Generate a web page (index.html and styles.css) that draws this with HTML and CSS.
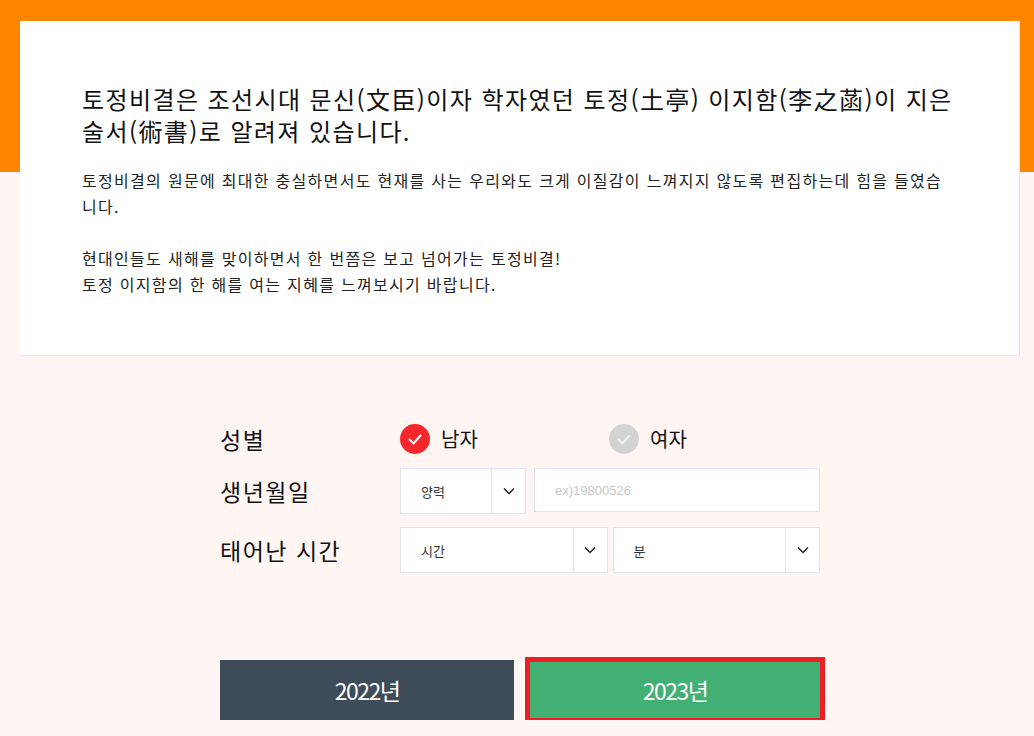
FILE: index.html
```html
<!DOCTYPE html>
<html lang="ko">
<head>
  <meta charset="UTF-8" />
  <meta name="viewport" content="width=device-width, initial-scale=1.0"/>
  <title>토정비결</title>
  <link rel="stylesheet" href="styles.css">
</head>
<body>

  <div class="page">
    <div class="intro-box">
      <h2>토정비결은 조선시대 문신(文臣)이자 학자였던 토정(土亭) 이지함(李之菡)이 지은<br>술서(術書)로 알려져 있습니다.</h2>
      <p>토정비결의 원문에 최대한 충실하면서도 현재를 사는 우리와도 크게 이질감이 느껴지지 않도록 편집하는데 힘을 들였습<br>니다.</p>
      <p>현대인들도 새해를 맞이하면서 한 번쯤은 보고 넘어가는 토정비결!<br>토정 이지함의 한 해를 여는 지혜를 느껴보시기 바랍니다.</p>
    </div>

    <div class="fortune-form">
      <div class="form-row gender-row">
        <div class="form-label">성별</div>
        <div class="gender-options">
          <label class="gender checked">
            <svg class="check" width="30" height="30" viewBox="0 0 30 30"><circle cx="15" cy="15" r="15"/><path d="M9.5 15.5 L13.5 19.5 L20.5 11.5"/></svg>
            <span>남자</span>
          </label>
          <label class="gender">
            <svg class="check" width="30" height="30" viewBox="0 0 30 30"><circle cx="15" cy="15" r="15"/><path d="M9.5 15.5 L13.5 19.5 L20.5 11.5"/></svg>
            <span>여자</span>
          </label>
        </div>
      </div>

      <div class="form-row">
        <div class="form-label">생년월일</div>
        <div class="birth-fields">
          <div class="select-box">
            <span class="select-value">양력</span>
            <span class="select-arrow"><svg width="12" height="8" viewBox="0 0 12 8"><path d="M1 1.5 L6 6.5 L11 1.5"/></svg></span>
          </div>
          <input class="birth-input" type="text" placeholder="ex)19800526">
        </div>
      </div>

      <div class="form-row">
        <div class="form-label">태어난 시간</div>
        <div class="time-fields">
          <div class="select-box">
            <span class="select-value">시간</span>
            <span class="select-arrow"><svg width="12" height="8" viewBox="0 0 12 8"><path d="M1 1.5 L6 6.5 L11 1.5"/></svg></span>
          </div>
          <div class="select-box">
            <span class="select-value">분</span>
            <span class="select-arrow"><svg width="12" height="8" viewBox="0 0 12 8"><path d="M1 1.5 L6 6.5 L11 1.5"/></svg></span>
          </div>
        </div>
      </div>
    </div>

    <div class="year-buttons">
      <button class="year-btn prev">2022년</button>
      <button class="year-btn current">2023년</button>
    </div>
  </div>

</body>
</html>
```

FILE: styles.css
```css
body {
  font-family: "Noto Sans CJK KR", "Noto Sans", sans-serif;
  background-color: #fff6f3;
  background-image: linear-gradient(#ff8500, #ff8500);
  background-size: 100% 172px;
  background-repeat: no-repeat;
  margin: 0;
  padding: 0;
  overflow: hidden;
  color: #111;
}

.page {
  width: 1040px;
  padding-top: 21px;
}

.intro-box {
  background: white;
  margin: 0 20px;
  padding: 62px 62px 58px;
  border: 1px solid #ebe7e5;
  border-top: none;
  border-left: none;
}

.intro-box h2 {
  font-size: 24px;
  font-weight: normal;
  line-height: 32px;
  letter-spacing: 1.4px;
  white-space: nowrap;
  margin: 0 0 20px;
  color: #111;
}

.intro-box p {
  font-size: 16px;
  line-height: 26px;
  letter-spacing: 1.3px;
  margin: 0 0 26px;
  color: #222;
}

.intro-box p:last-child {
  margin-bottom: 0;
}

.fortune-form {
  width: 600px;
  margin: 68px 0 0 220px;
  display: flex;
  flex-direction: column;
  gap: 13px;
}

.form-row {
  display: grid;
  grid-template-columns: 180px 420px;
  align-items: center;
}

.gender-row {
  margin-bottom: 1px;
}

.form-label {
  font-size: 23px;
  line-height: 30px;
  letter-spacing: 1.5px;
  color: #111;
}

.gender-options {
  display: grid;
  grid-template-columns: 209px 1fr;
  height: 30px;
}

.gender {
  display: flex;
  align-items: center;
  gap: 11px;
  font-size: 20px;
  line-height: 30px;
  cursor: pointer;
}

.check circle { fill: #d3d3d3; }
.check path {
  fill: none;
  stroke: #f2f2f2;
  stroke-width: 2;
  stroke-linecap: round;
  stroke-linejoin: round;
}

.gender.checked .check circle { fill: #f5262c; }
.gender.checked .check path { stroke: white; }

.birth-fields {
  display: grid;
  grid-template-columns: 126px 1fr;
  gap: 8px;
  align-items: start;
}

.time-fields {
  display: grid;
  grid-template-columns: 1fr 1fr;
  gap: 5px;
}

.select-box {
  display: flex;
  height: 44px;
  background: white;
  border: 1px solid #e0e4ee;
}

.select-value {
  flex: 1;
  display: flex;
  align-items: center;
  padding-left: 20px;
  font-size: 13px;
  color: #333;
}

.select-arrow {
  width: 33px;
  display: flex;
  align-items: center;
  justify-content: center;
  border-left: 1px solid #e0e4ee;
}

.select-arrow path {
  fill: none;
  stroke: #222;
  stroke-width: 1.5;
}

.birth-input {
  height: 42px;
  box-sizing: content-box;
  border: 1px solid #e0e4ee;
  background: white;
  padding: 0 0 0 20px;
  margin: 0;
  font-family: "Liberation Sans", Arial, sans-serif;
  font-size: 13px;
  outline: none;
}

.birth-input::placeholder {
  color: #c8c8c8;
}

.year-buttons {
  margin: 87px 0 0 220px;
  display: flex;
  gap: 14px;
}

.year-btn {
  width: 294px;
  height: 60px;
  border: none;
  color: white;
  font-family: "Noto Sans CJK KR", sans-serif;
  font-size: 23px;
  letter-spacing: -1.5px;
  cursor: pointer;
}

.prev {
  background: #3e4c59;
}

.current {
  background: #43b073;
  outline: 5px solid #ee1c25;
  outline-offset: -2px;
}
```
